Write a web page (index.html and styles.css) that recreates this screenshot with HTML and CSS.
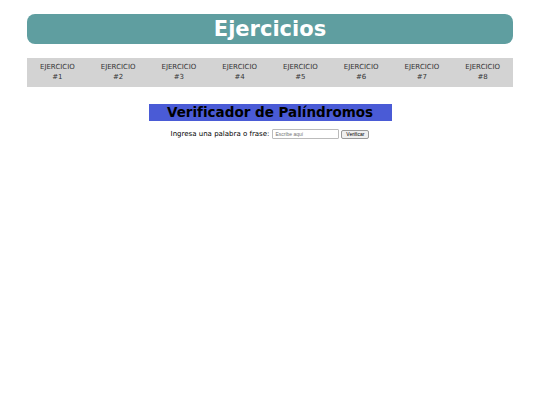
FILE: index.html
```html
<!DOCTYPE html>
<html lang="es">
<head>
    <meta charset="UTF-8">
    <meta name="viewport" content="width=device-width, initial-scale=1.0">
    <title>Ejercicios</title>
    <link rel="stylesheet" href="styles.css">
</head>
<body>
    <div class="page">
        <header class="main-header">
            <h1>Ejercicios</h1>
        </header>

        <nav class="menu">
            <a href="#">EJERCICIO<br>#1</a>
            <a href="#">EJERCICIO<br>#2</a>
            <a href="#">EJERCICIO<br>#3</a>
            <a href="#">EJERCICIO<br>#4</a>
            <a href="#">EJERCICIO<br>#5</a>
            <a href="#">EJERCICIO<br>#6</a>
            <a href="#">EJERCICIO<br>#7</a>
            <a href="#">EJERCICIO<br>#8</a>
        </nav>

        <section class="exercise">
            <h2>Verificador de Palíndromos</h2>
            <div class="form-row">
                <label for="texto">Ingresa una palabra o frase:</label>
                <input type="text" id="texto" placeholder="Escribe aquí">
                <button id="verificar">Verificar</button>
            </div>
            <p id="resultado"></p>
        </section>
    </div>

    <script>
        document.getElementById("verificar").addEventListener("click", () => {
            const texto = document.getElementById("texto").value;
            const limpio = texto.toLowerCase().normalize("NFD")
                .replace(/[\u0300-\u036f]/g, "").replace(/[^a-z0-9]/g, "");
            const esPalindromo = limpio.length > 0 && limpio === limpio.split("").reverse().join("");
            document.getElementById("resultado").textContent = esPalindromo
                ? "Es un palíndromo"
                : "No es un palíndromo";
        });
    </script>
</body>
</html>
```

FILE: styles.css
```css
body {
    font-family: "DejaVu Sans", Verdana, sans-serif;
    margin: 0;
    padding: 0;
    background-color: #fff;
}
.page {
    width: 90%;
    margin: 0 auto;
    padding-top: 14px;
}
.main-header {
    height: 30px;
    background-color: #5f9ea0;
    border-radius: 8px;
    display: flex;
    align-items: center;
    justify-content: center;
}
.main-header h1 {
    margin: 0;
    color: #fff;
    font-size: 21px;
    font-weight: bold;
}
.menu {
    display: flex;
    height: 29px;
    margin-top: 14px;
    background-color: #d3d3d3;
    align-items: center;
}
.menu a {
    flex: 1;
    text-align: center;
    font-size: 7px;
    line-height: 9.5px;
    color: #333;
    text-decoration: none;
}
.exercise {
    text-align: center;
}
.exercise h2 {
    width: 50%;
    margin: 17px auto 0;
    background-color: #4a5bd6;
    color: #000;
    font-size: 13.5px;
    line-height: 17px;
}
.form-row {
    margin-top: 8px;
    display: flex;
    justify-content: center;
    align-items: center;
    gap: 2px;
    font-size: 7px;
    color: #000;
}
.form-row label {
    margin-right: 1px;
}
.form-row input {
    box-sizing: border-box;
    width: 67px;
    height: 10px;
    padding: 0 2px;
    border: 1px solid #bbb;
    border-radius: 1px;
    font-family: "Liberation Sans", Arial, sans-serif;
    font-size: 5px;
}
.form-row button {
    box-sizing: border-box;
    width: 28px;
    height: 9px;
    padding: 0;
    border: 1px solid #999;
    border-radius: 2px;
    background-color: #efefef;
    font-family: "Liberation Sans", Arial, sans-serif;
    font-size: 5px;
    color: #000;
}
#resultado {
    margin: 6px 0 0;
    font-size: 7px;
}
```
